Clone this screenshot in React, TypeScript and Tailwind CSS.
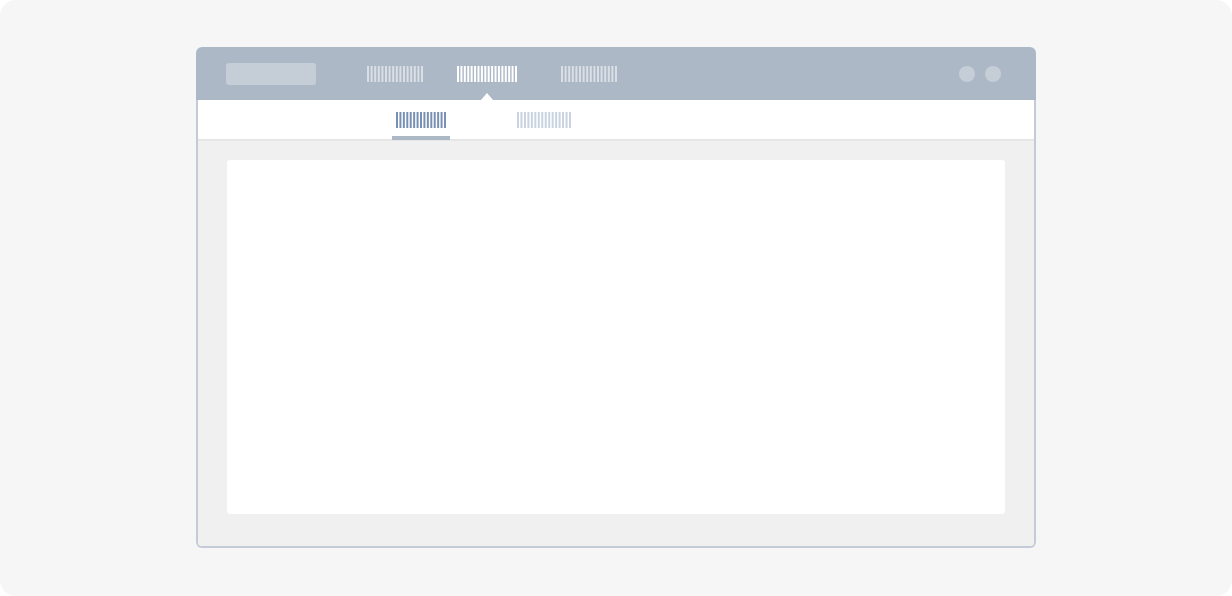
import React from 'react';

// placeholder text drawn as vertical hairlines
function Stripes({ width, color, opacity = 1 }: { width: number; color: string; opacity?: number }) {
  const n = Math.round((width - 2) / 3.5) + 1;
  const step = (width - 2) / (n - 1);
  return (
    <svg width={width} height={16} viewBox={`0 0 ${width} 16`} className="block">
      {Array.from({ length: n }).map((_, i) => (
        <rect key={i} x={i * step} y={0} width={2} height={16} fill={color} opacity={opacity} />
      ))}
    </svg>
  );
}

export default function App() {
  return (
    <div className="w-[1232px] h-[596px] bg-white font-['Liberation_Sans',sans-serif]">
      <div className="h-full rounded-2xl bg-[#f6f6f6] flex justify-center pt-[47px]">
        <div className="w-[840px] h-[501px] flex flex-col">
          {/* Top bar */}
          <div className="h-[53px] shrink-0 bg-[#adb8c6] rounded-t-md flex items-center pl-[30px] pr-[35px] pt-[1px]">
            <div className="w-[90px] h-[22px] rounded-[3px] bg-[#c5cdd7]" />
            <div className="ml-[51px]">
              <Stripes width={56} color="#ffffff" opacity={0.55} />
            </div>
            <div className="relative ml-[34px]">
              <Stripes width={60} color="#ffffff" />
              <div className="absolute left-1/2 -translate-x-1/2 top-[27px] w-0 h-0 border-x-[6px] border-x-transparent border-b-[7px] border-b-white" />
            </div>
            <div className="ml-[44px]">
              <Stripes width={56} color="#ffffff" opacity={0.55} />
            </div>
            <div className="ml-auto flex items-center gap-[10px]">
              <span className="w-4 h-4 rounded-full bg-[#c5cdd7]" />
              <span className="w-4 h-4 rounded-full bg-[#c5cdd7]" />
            </div>
          </div>

          {/* Body */}
          <div className="flex-1 flex flex-col border-x-2 border-b-2 border-[#c5cbd6] rounded-b-md overflow-hidden">
            <div className="h-[41px] shrink-0 bg-white border-b-2 border-[#e6e6e6] flex items-end pl-[194px]">
              <div className="w-[58px] h-[41px] -mb-[1px] flex justify-center pt-[13px] border-b-4 border-[#adb8c6]">
                <Stripes width={50} color="#7890b4" />
              </div>
              <div className="ml-[67px] h-[41px] -mb-[1px] pt-[13px]">
                <Stripes width={54} color="#c9d3e1" />
              </div>
            </div>
            <div className="flex-1 bg-[#f0f0f0] pt-[19px] px-[29px] pb-[32px] flex">
              <div className="flex-1 bg-white rounded-[3px]" />
            </div>
          </div>
        </div>
      </div>
    </div>
  );
}
